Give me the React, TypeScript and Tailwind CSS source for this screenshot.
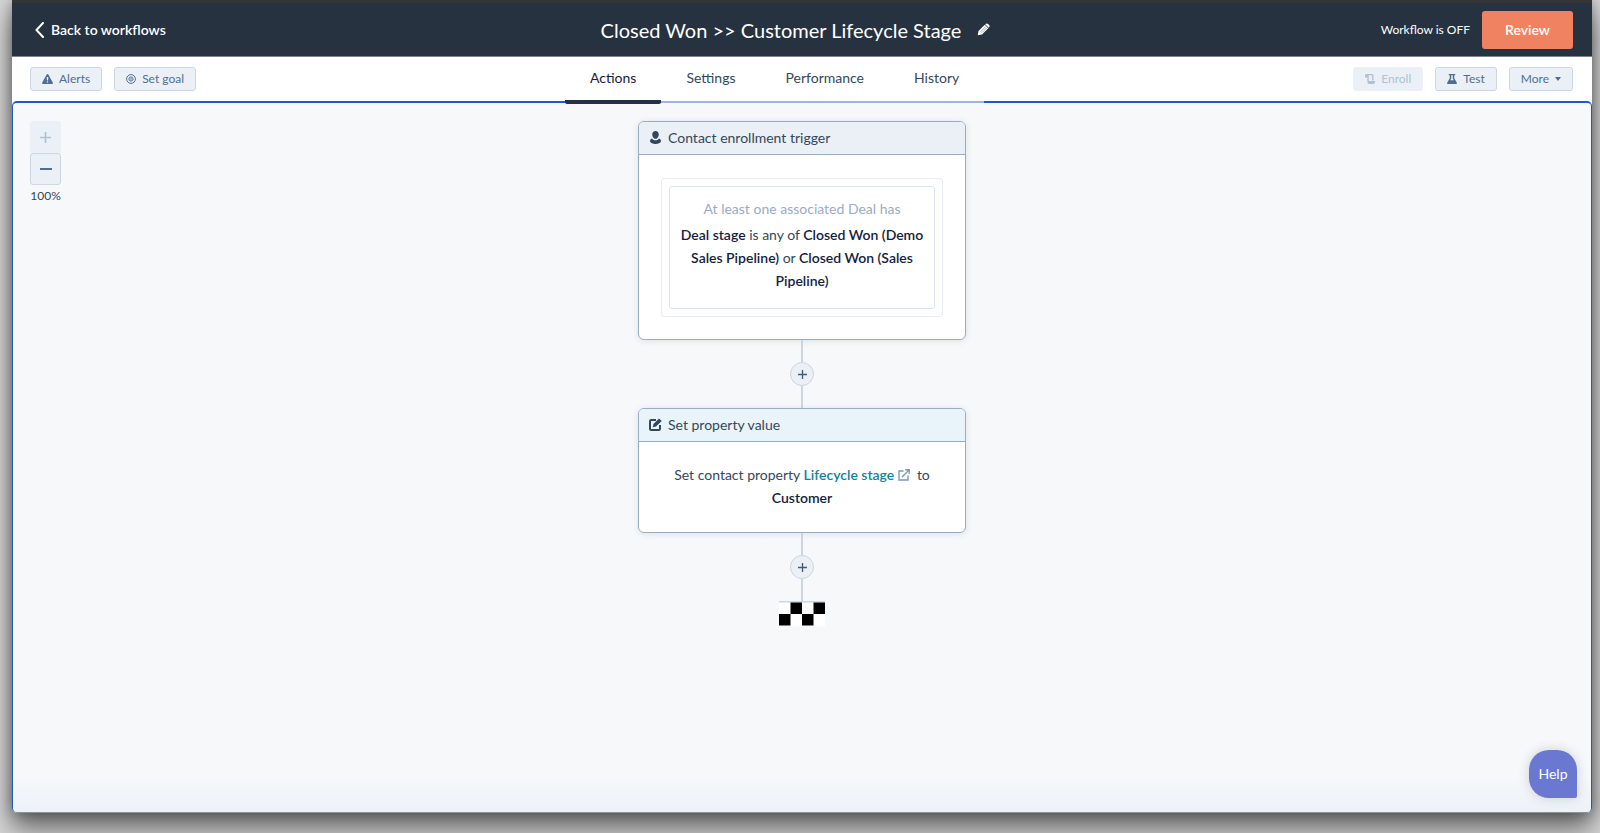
import type { ReactNode } from "react";

const TABS = ["Actions", "Settings", "Performance", "History"];

function AlertIcon() {
  return (
    <svg width="11" height="10" viewBox="0 0 22 20" fill="currentColor" aria-hidden="true">
      <path fillRule="evenodd" d="M11 0c.8 0 1.400.4 1.700 1l9 16.500c.6 1.200-.1 2.500-1.500 2.500H1.800C.4 20-.3 18.700.3 17.500L9.300 1C9.600.4 10.200 0 11 0Zm-1.600 6 .5 7h2.200l.5-7H9.400ZM11 14.500a1.500 1.500 0 1 0 0 3 1.500 1.500 0 0 0 0-3Z" />
    </svg>
  );
}

function GoalIcon() {
  return (
    <svg width="10" height="10" viewBox="0 0 20 20" fill="none" stroke="currentColor" strokeWidth="2" aria-hidden="true">
      <circle cx="10" cy="10" r="8.800" />
      <circle cx="10" cy="10" r="4.200" />
      <circle cx="10" cy="10" r="1.600" fill="currentColor" stroke="none" />
    </svg>
  );
}

function EnrollIcon() {
  return (
    <svg width="10" height="10" viewBox="0 0 20 20" fill="currentColor" aria-hidden="true">
      <path d="M3 0h10.500A3.500 3.500 0 0 1 17 3.500V13h-2.800V4c0-.8-.5-1.300-1.200-1.300H7.500V14H20v2.500a3.500 3.500 0 0 1-3.500 3.500H8.300a3.500 3.500 0 0 1-3.500-3.500V7H0V3a3 3 0 0 1 3-3Z" />
    </svg>
  );
}

function FlaskIcon() {
  return (
    <svg width="10" height="10" viewBox="0 0 20 20" fill="currentColor" aria-hidden="true">
      <path fillRule="evenodd" d="M3.500 0h13v2.600h-2v6L19.500 17c.9 1.500.2 3-1.500 3H2C.3 20-.4 18.500.5 17L5.500 8.600v-6h-2V0Zm5 2.600V9l-1.900 3.500h6.800L11.500 9V2.600h-3Z" />
    </svg>
  );
}

function PencilIcon() {
  return (
    <svg width="13" height="13" viewBox="0 0 26 26" fill="currentColor" aria-hidden="true">
      <path d="M1.500 24.500l1.500-8.500L15.500 3.500l7 7L10 23 1.500 24.500Z" />
      <path d="M17 2c1.500-1.500 3.500-1.700 5-.2l2.200 2.200c1.500 1.500 1.300 3.500-.2 5l-.6.700-7-7 .6-.7Z" />
      <path d="M7 17.500 17 7.500M9.500 19.500l10-10" stroke="#263240" strokeWidth="0.800" />
    </svg>
  );
}

function PersonIcon() {
  return (
    <svg width="11" height="13" viewBox="0 0 22 26" fill="currentColor" aria-hidden="true">
      <path d="M11 0c4 0 6.500 2.500 6.500 6.500 0 3-1 6-3.200 7.800-1.800 1.500-4.800 1.500-6.600 0C5.500 12.500 4.500 9.500 4.500 6.500 4.500 2.500 7 0 11 0Z" />
      <path d="M4.200 15C6 18 8.500 18.700 11 18.700s5-.7 6.800-3.700c3 .8 4.200 3 4.200 5.200 0 3.500-4.500 5.800-11 5.800S0 23.700 0 20.200C0 18 1.200 15.800 4.200 15Z" />
    </svg>
  );
}

function EditIcon() {
  return (
    <svg width="13" height="13" viewBox="0 0 26 26" fill="none" stroke="currentColor" aria-hidden="true">
      <path d="M14 4H4.500A2.500 2.500 0 0 0 2 6.500v15A2.500 2.500 0 0 0 4.500 24h15a2.500 2.500 0 0 0 2.500-2.500V14" strokeWidth="4" />
      <path d="M7.500 18.500l1.500-6.500L20 .8 25.500 6 14 17.200l-6.500 1.300Z" fill="currentColor" stroke="none" />
    </svg>
  );
}

function ExternalIcon() {
  return (
    <svg width="12" height="12" viewBox="0 0 24 24" fill="none" stroke="currentColor" strokeWidth="2.800" className="inline-block align-[-1px]" aria-hidden="true">
      <path d="M11 4H2v18h18v-9" />
      <path d="M8 16 22 2M14.500 1.500h8v8" />
    </svg>
  );
}

function Plus({ size }: { size: number }) {
  return (
    <svg width={size} height={size} viewBox="0 0 10 10" stroke="currentColor" strokeWidth="1.500" aria-hidden="true">
      <path d="M5 0v10M0 5h10" />
    </svg>
  );
}

function ToolButton({ children, disabled }: { children: ReactNode; disabled?: boolean }) {
  return (
    <button
      type="button"
      disabled={disabled}
      className="flex h-6 items-center gap-1.5 rounded-[3px] border border-[#cbd6e2] bg-[#eaf0f5] px-[11px] text-xs text-[#506e91] disabled:border-[#eaf0f5] disabled:text-[#b0c1d4]"
    >
      {children}
    </button>
  );
}

function Connector() {
  return (
    <div className="flex flex-col items-center">
      <div className="h-[22px] w-0.5 bg-[#cbd6e2]" />
      <button
        type="button"
        aria-label="Add action"
        className="flex size-6 items-center justify-center rounded-full border border-[#cbd6e2] bg-[#eaf0f5] text-[#425b76]"
      >
        <Plus size={9} />
      </button>
      <div className="h-[22px] w-0.5 bg-[#cbd6e2]" />
    </div>
  );
}

function Card({ icon, title, headClass, children }: { icon: ReactNode; title: string; headClass: string; children: ReactNode }) {
  return (
    <section className="w-82 overflow-hidden rounded-md border border-[#99acc2] bg-white shadow-[0_1px_6px_rgba(45,62,80,0.12)]">
      <h2 className={`flex h-[33px] items-center gap-1.5 border-b border-[#99acc2] px-2.5 pb-px text-sm text-[#33475b] ${headClass}`}>
        <span className="flex w-[13px] justify-center">{icon}</span>
        {title}
      </h2>
      {children}
    </section>
  );
}

function FinishFlag() {
  return (
    <svg width="46" height="25" viewBox="0 0 46 25" role="img" aria-label="End of workflow">
      <path d="M0 1h46v24H0z" fill="#fff" />
      <path d="M0 0h46v1.500H0z" fill="#cbd6e2" />
      <path d="M11.500 1.500H23V13H11.500zM34.500 1.500H46V13H34.500zM0 13h11.500v11.500H0zM23 13h11.500v11.500H23z" fill="#000" />
    </svg>
  );
}

export default function App() {
  return (
    <div className="flex min-h-screen flex-col overflow-hidden bg-[#d6d6d6] pr-2 pb-5 pl-3 font-['Lato','Open_Sans',sans-serif] text-[#33475b]">
      <div className="relative flex flex-1 flex-col rounded-b-[5px] bg-white shadow-[0_0_14px_rgba(0,0,0,0.35),0_16px_26px_rgba(0,0,0,0.5)]">
        <header className="grid h-[57px] grid-cols-[1fr_auto_1fr] items-center border-t-3 border-b border-t-[#333536] border-b-[#7c8490] bg-[#263240] pr-[19px] pl-[18px] text-white">
          <a href="#workflows" className="flex items-center gap-[7px] justify-self-start pl-[5px] text-sm font-semibold">
            <svg width="9" height="16" viewBox="0 0 9 16" fill="none" stroke="currentColor" strokeWidth="2" strokeLinecap="round" aria-hidden="true">
              <path d="M8 1 1.500 8 8 15" />
            </svg>
            Back to workflows
          </a>
          <div className="flex items-center gap-2">
            <h1 className="text-xl">Closed Won &gt;&gt; Customer Lifecycle Stage</h1>
            <button type="button" aria-label="Rename workflow" className="py-2.5 pr-3 pl-2">
              <PencilIcon />
            </button>
          </div>
          <div className="flex items-center gap-3 justify-self-end">
            <span className="text-xs">Workflow is OFF</span>
            <button type="button" className="h-[38px] rounded-[3px] bg-[#f08262] px-[23px] text-sm font-semibold">
              Review
            </button>
          </div>
        </header>

        <div className="flex h-11 items-center justify-between pr-[19px] pl-[18px]">
          <div className="flex gap-3">
            <ToolButton>
              <AlertIcon />
              Alerts
            </ToolButton>
            <ToolButton>
              <GoalIcon />
              Set goal
            </ToolButton>
          </div>
          <nav className="z-10 flex h-[47px] self-start">
            {TABS.map((tab, i) => (
              <a
                key={tab}
                href={`#${tab.toLowerCase()}`}
                aria-current={i === 0 ? "page" : undefined}
                className={
                  i === 0
                    ? "h-[47px] rounded-b-xs border-b-4 border-[#253048] px-[25px] pt-[11px] text-sm text-[#14213d]"
                    : "h-[46px] border-b-2 border-[#a3b1dc] px-[25px] pt-[11px] text-sm"
                }
              >
                {tab}
              </a>
            ))}
          </nav>
          <div className="flex gap-3">
            <ToolButton disabled>
              <EnrollIcon />
              Enroll
            </ToolButton>
            <ToolButton>
              <FlaskIcon />
              Test
            </ToolButton>
            <ToolButton>
              More
              <svg width="6" height="4" viewBox="0 0 6 4" fill="currentColor" aria-hidden="true">
                <path d="M0 0h6L3 4z" />
              </svg>
            </ToolButton>
          </div>
        </div>

        <main className="relative flex flex-1 flex-col items-center rounded-[5px] border-x border-t-2 border-b border-x-[#1f5bb5] border-t-[#2456c8] border-b-[#8a929c] bg-linear-to-b from-[#f6f8fa] from-95% to-[#edf2f7] pt-[18px]">
          <div className="absolute top-[18px] left-[17px] flex w-[31px] flex-col">
            <button type="button" aria-label="Zoom in" disabled className="flex h-8 items-center justify-center rounded-t-[3px] bg-[#eaf0f5] text-[#b0c1d4]">
              <Plus size={11} />
            </button>
            <button type="button" aria-label="Zoom out" className="flex h-8 items-center justify-center rounded-[3px] border border-[#cbd6e2] bg-[#eaf0f5] text-[#506e91]">
              <svg width="12" height="2" viewBox="0 0 12 2" fill="currentColor" aria-hidden="true">
                <path d="M0 0h12v2H0z" />
              </svg>
            </button>
            <span className="pt-[3px] text-center text-xs">100%</span>
          </div>

          <Card icon={<PersonIcon />} title="Contact enrollment trigger" headClass="bg-[#eaf0f5]">
            <div className="px-[22px] pt-[23px] pb-[22px]">
              <div className="rounded-[3px] border border-[#e9ebf2] p-[7px]">
                <div className="rounded-[3px] border border-[#dfe3eb] px-2.5 pt-2.5 pb-4 text-center text-sm leading-[23px]">
                  <p className="pb-[3px] text-[#99acc2]">At least one associated Deal has</p>
                  <p>
                    <b className="font-semibold text-[#14213d]">Deal stage</b> is any of{" "}
                    <b className="font-semibold text-[#14213d]">Closed Won (Demo Sales Pipeline)</b> or{" "}
                    <b className="font-semibold text-[#14213d]">Closed Won (Sales Pipeline)</b>
                  </p>
                </div>
              </div>
            </div>
          </Card>
          <Connector />
          <Card icon={<EditIcon />} title="Set property value" headClass="bg-[#e8f4f9]">
            <p className="px-8 pt-[21px] pb-[23px] text-center text-sm leading-[23px]">
              Set contact property{" "}
              <a href="#lifecycle-stage" className="font-semibold text-[#158099]">
                Lifecycle stage <span className="text-[#7c98b6]"><ExternalIcon /></span>
              </a>
              {"\u00a0 to "}
              <b className="font-semibold text-[#14213d]">Customer</b>
            </p>
          </Card>
          <Connector />
          <FinishFlag />

          <button
            type="button"
            className="absolute right-[14px] bottom-[14px] size-12 rounded-[20px] rounded-br-xs bg-[#6a78d1] text-sm text-white shadow-[0_0_12px_rgba(45,62,80,0.2)]"
          >
            Help
          </button>
        </main>
      </div>
    </div>
  );
}
